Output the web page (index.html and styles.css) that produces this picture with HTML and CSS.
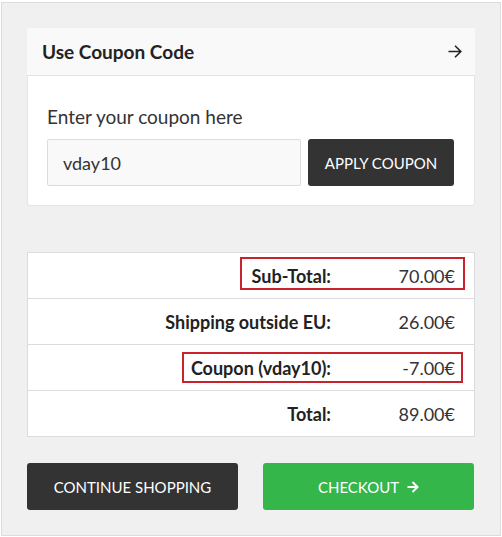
FILE: index.html
```html
<!DOCTYPE html>
<html>
<head>
<meta charset="utf-8">
<link rel="stylesheet" href="styles.css">
</head>
<body>
<div class="frame">
  <div class="coupon-card">
    <div class="coupon-head">
      <span class="coupon-title">Use Coupon Code</span>
      <svg class="head-arrow" width="14" height="13" viewBox="0 0 14 13"><path d="M0.5 6.5H13M7 0.8L12.8 6.5L7 12.2" fill="none" stroke="#222" stroke-width="1.6"/></svg>
    </div>
    <div class="coupon-body">
      <div class="coupon-label">Enter your coupon here</div>
      <div class="coupon-row">
        <div class="coupon-input">vday10</div>
        <div class="btn btn-dark btn-apply">APPLY COUPON</div>
      </div>
    </div>
  </div>

  <div class="totals">
    <div class="row"><span class="label">Sub-Total:</span><span class="value">70.00€</span></div>
    <div class="row"><span class="label">Shipping outside EU:</span><span class="value">26.00€</span></div>
    <div class="row"><span class="label">Coupon (vday10):</span><span class="value">-7.00€</span></div>
    <div class="row last"><span class="label">Total:</span><span class="value">89.00€</span></div>
    <div class="mark mark-sub"></div>
    <div class="mark mark-coupon"></div>
  </div>

  <div class="actions">
    <div class="btn btn-dark btn-big">CONTINUE SHOPPING</div>
    <div class="btn btn-green btn-big">CHECKOUT <svg class="co-arrow" width="12" height="12" viewBox="0 0 12 12"><path d="M0.5 6H10.5M5.5 1L10.5 6L5.5 11" fill="none" stroke="#fff" stroke-width="2"/></svg></div>
  </div>
</div>
</body>
</html>
```
FILE: styles.css
```css
* { box-sizing: border-box; }
html, body { margin: 0; padding: 0; background: #fff; }
body {
  font-family: "Lato", "Open Sans", sans-serif;
  color: #222;
}
.frame {
  margin: 2px 2px 1px 1px;
  width: 500px;
  height: 534px;
  border: 1px solid #dcdcdc;
  background: #f0f0f0;
  padding: 25px 25px 24px 25px;
}
.coupon-card {
  background: #fff;
  border-radius: 0 0 3px 3px;
}
.coupon-head {
  height: 48px;
  background: #f9f9f9;
  border-bottom: 1px solid #e3e3e3;
  display: flex;
  align-items: center;
  justify-content: space-between;
  padding: 0 13px 0 15px;
}
.coupon-title {
  font-size: 19px;
  font-weight: 700;
  color: #222;
}
.head-arrow { display: block; }
.coupon-body {
  border: 1px solid #e5e5e5;
  border-top: none;
  border-radius: 0 0 3px 3px;
  padding: 29px 19px 19px 19px;
  height: 130px;
}
.coupon-label {
  font-size: 19px;
  line-height: 24px;
  color: #333;
  margin-bottom: 10px;
}
.coupon-row {
  display: flex;
  gap: 7px;
}
.coupon-input {
  width: 254px;
  height: 47px;
  background: #f9f9f9;
  border: 1px solid #dcdcdc;
  border-radius: 2px;
  font-size: 18px;
  color: #333;
  display: flex;
  align-items: center;
  padding-left: 15px;
}
.btn {
  display: flex;
  align-items: center;
  justify-content: center;
  color: #fff;
  border-radius: 3px;
  font-size: 15px;
}
.btn-dark { background: #333; }
.btn-green { background: #34b64a; }
.btn-apply {
  width: 146px;
  height: 47px;
}
.totals {
  position: relative;
  margin-top: 46px;
  background: #fff;
  border: 1px solid #dcdcdc;
}
.row {
  display: grid;
  grid-template-columns: 1fr 124px;
  height: 46px;
  align-items: center;
  padding-right: 19px;
  border-bottom: 1px solid #dcdcdc;
  font-size: 18px;
}
.row.last { border-bottom: none; height: 45px; }
.label {
  text-align: right;
  font-weight: 700;
  color: #222;
}
.value {
  text-align: right;
  color: #333;
}
.mark {
  position: absolute;
  border: 2px solid #c8232c;
}
.mark-sub { left: 212px; top: 4px; width: 225px; height: 33px; }
.mark-coupon { left: 154px; top: 99px; width: 281px; height: 31px; }
.actions {
  margin-top: 26px;
  display: flex;
  gap: 25px;
}
.btn-big {
  width: 211px;
  height: 47px;
}
.co-arrow { margin-left: 8px; }
```
